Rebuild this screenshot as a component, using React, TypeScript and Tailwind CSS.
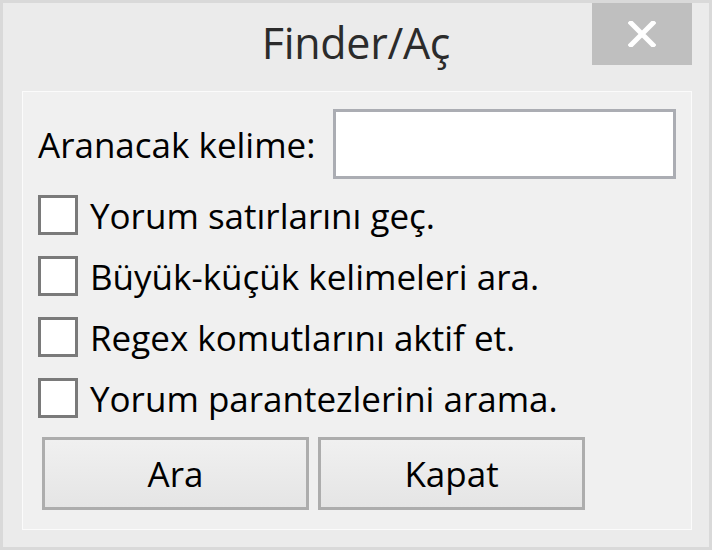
import React from "react";

/* ---------- Data ---------- */

const options = [
  "Yorum satırlarını geç.",
  "Büyük-küçük kelimeleri ara.",
  "Regex komutlarını aktif et.",
  "Yorum parantezlerini arama.",
];

const font = { fontFamily: '"Open Sans", "Noto Sans", sans-serif' };

/* ---------- Pieces ---------- */

function CloseButton() {
  return (
    <button className="flex h-[62px] w-[100px] items-center justify-center bg-[#bfbfbf]">
      <svg width="28" height="26" viewBox="0 0 28 26">
        <path d="M3 2 L25 24 M25 2 L3 24" stroke="#ffffff" strokeWidth="5" strokeLinecap="square" />
      </svg>
    </button>
  );
}

function Checkbox({ label }: { label: string }) {
  const [checked, setChecked] = React.useState(false);
  return (
    <label className="flex h-[40px] cursor-default items-center gap-[12px]" onClick={() => setChecked(!checked)}>
      <span className="box-border flex h-[40px] w-[40px] shrink-0 items-center justify-center border-[3px] border-[#7a7a7a] bg-white">
        {checked && <span className="h-[18px] w-[18px] bg-[#333]" />}
      </span>
      <span className="whitespace-nowrap text-[35px] leading-none text-black">{label}</span>
    </label>
  );
}

function DialogButton({ children }: { children: React.ReactNode }) {
  return (
    <button className="box-border flex h-[73px] w-[267px] items-center justify-center border-[3px] border-[#adadad] bg-gradient-to-b from-[#f0f0f0] to-[#e5e5e5] text-[35px] leading-none text-black">
      {children}
    </button>
  );
}

/* ---------- App ---------- */

export default function App() {
  return (
    <div style={font} className="box-border flex h-[550px] w-[712px] flex-col border-[3px] border-[#d9d9d9] bg-[#ebebeb]">
      {/* title bar */}
      <div className="relative flex h-[88px] shrink-0 items-start justify-center">
        <div className="pt-[18px] text-[43px] leading-none text-[#2b2b2b] tracking-[-0.3px]">Finder/Aç</div>
        <div className="absolute right-[17px] top-0">
          <CloseButton />
        </div>
      </div>

      {/* body */}
      <div className="mb-[17px] ml-[19px] mr-[17px] flex flex-1 flex-col border border-[#fbfbfb] bg-[#f0f0f0] pl-[15px] pt-[17px]">
        <div className="flex items-center">
          <span className="w-[295px] whitespace-nowrap text-[35px] leading-none text-black">Aranacak kelime:</span>
          <input className="box-border h-[70px] w-[343px] border-[3px] border-[#abadb3] bg-white px-2 text-[30px] outline-none" />
        </div>

        <div className="mt-[16px] flex flex-col gap-[21px]">
          {options.map((o) => (
            <Checkbox key={o} label={o} />
          ))}
        </div>

        <div className="ml-[4px] mt-[19px] flex gap-[9px]">
          <DialogButton>Ara</DialogButton>
          <DialogButton>Kapat</DialogButton>
        </div>
      </div>
    </div>
  );
}
